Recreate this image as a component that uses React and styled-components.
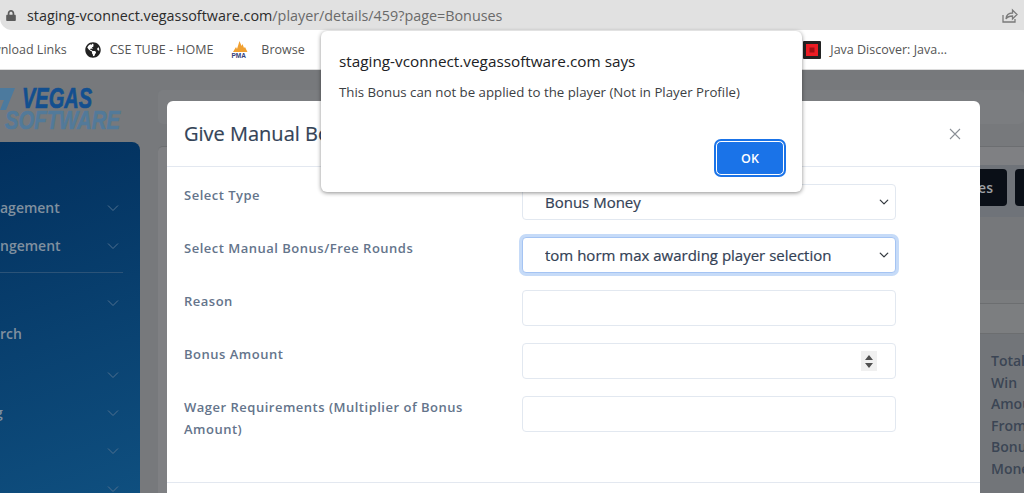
import React from 'react';
import styled, { createGlobalStyle } from 'styled-components';
import { FaGlobeAmericas, FaLock } from 'react-icons/fa';

const chevronUrl = `url("data:image/svg+xml,%3Csvg xmlns='http://www.w3.org/2000/svg' viewBox='0 0 16 16'%3E%3Cpath fill='none' stroke='%23343a40' stroke-linecap='round' stroke-linejoin='round' stroke-width='2' d='M2 5l6 6 6-6'/%3E%3C/svg%3E")`;
const spinnerUrl = `url("data:image/svg+xml,%3Csvg xmlns='http://www.w3.org/2000/svg' viewBox='0 0 16 20'%3E%3Cpath fill='%23505050' d='M8 4l4 5H4zM8 17l-4-5h8z'/%3E%3C/svg%3E")`;

const GlobalStyle = createGlobalStyle`
  html, body {
    margin: 0;
    background: #fff;
  }
  * {
    box-sizing: border-box;
  }
`;

// browser chrome ---------------------------------------------------------
const Page = styled.div`
  position: relative;
  width: 1024px;
  height: 493px;
  overflow: hidden;
  display: flex;
  flex-direction: column;
  font-family: "Open Sans", "Noto Sans", sans-serif;
  background: #fff;
`;

const AddressBar = styled.div`
  flex: none;
  height: 30px;
  display: flex;
  align-items: center;
  padding: 0 6px;
  background: #e1e1e1;
  border-bottom-left-radius: 12px;
`;

const LockIcon = styled(FaLock)`
  flex: none;
  width: 10px;
  height: 11px;
  color: #5c5c5c;
  margin-right: 11px;
`;

const Url = styled.div`
  flex: 1;
  font-size: 14.35px;
  color: #6a6a6a;
  white-space: nowrap;
`;

const Host = styled.span`
  color: #2c2c2c;
`;

const ShareIcon = styled.svg`
  flex: none;
  width: 17px;
  height: 17px;
  fill: none;
  stroke: #7a7a7a;
  stroke-width: 1.3;
`;

const BookmarkBar = styled.div`
  flex: none;
  height: 40px;
  display: flex;
  align-items: center;
  gap: 18px;
  padding-right: 77px;
  background: #fff;
  border-bottom: 1px solid #dcdcdc;
`;

const Bookmark = styled.div`
  display: flex;
  align-items: center;
  gap: ${(p) => p.$gap || 9}px;
  margin-left: ${(p) => p.$shift || 0}px;
  font-size: 12.5px;
  color: #555;
  white-space: nowrap;
`;

const BarSpacer = styled.div`
  flex: 1;
`;

const GlobeIcon = styled(FaGlobeAmericas)`
  width: 16px;
  height: 16px;
  color: #222;
`;

const BookmarkLogo = styled.svg`
  width: 18px;
  height: 18px;
  display: block;
`;

// dimmed page behind the modal --------------------------------------------
const Viewport = styled.div`
  position: relative;
  flex: 1;
  min-height: 0;
  display: flex;
  gap: 18px;
  background: #77797c;
`;

const LeftColumn = styled.div`
  flex: none;
  width: 140px;
  display: flex;
  flex-direction: column;
`;

const Logo = styled.div`
  position: relative;
  height: 72px;
  padding: 17px 0 0 22px;
  font-family: "Liberation Sans", sans-serif;
  font-weight: 700;
  font-style: italic;
`;

const LogoMark = styled.svg`
  position: absolute;
  left: 0;
  top: 18px;
  width: 16px;
  height: 23px;
`;

const LogoLine = styled.div`
  font-size: ${(p) => p.$size}px;
  line-height: 22px;
  margin-left: ${(p) => p.$shift}px;
  color: ${(p) => p.$color};
  -webkit-text-stroke: 0.7px ${(p) => p.$color};
  transform: scaleX(${(p) => p.$stretch});
  transform-origin: left center;
  white-space: nowrap;
`;

const Sidebar = styled.nav`
  flex: 1;
  padding-top: 47px;
  border-top-right-radius: 8px;
  background: linear-gradient(160deg, #02305e 0%, #0f4f7f 100%);
  overflow: hidden;
`;

const MenuRow = styled.div`
  height: 38px;
  margin-top: ${(p) => p.$top || 0}px;
  display: flex;
  align-items: center;
  justify-content: space-between;
  padding-right: 21px;
  font-size: 14px;
  font-weight: 600;
  color: #80909f;
  white-space: nowrap;
`;

const MenuText = styled.span`
  margin-left: ${(p) => p.$clip || 0}px;
  margin-top: -2px;
`;

const MenuChevron = styled.svg`
  width: 12px;
  height: 8px;
  margin-left: auto;
  fill: none;
  stroke: #50708f;
  stroke-width: 1;
`;

const MenuDivider = styled.div`
  width: 123px;
  height: 1px;
  margin-top: 7px;
  background: #2b5378;
`;

const Main = styled.div`
  flex: 1;
  min-width: 0;
  padding-top: 20px;
  display: flex;
  flex-direction: column;
`;

const TopPanel = styled.div`
  height: 34px;
  margin-bottom: 22px;
  border-radius: 5px;
  background: #7b7d80;
`;

const Card = styled.div`
  flex: 1;
  display: flex;
  flex-direction: column;
  padding-left: 12px;
  border-top: 1px solid #6c6e71;
  border-top-left-radius: 5px;
  background: #7f8083;
`;

const CardHead = styled.div`
  height: 18px;
`;

const Toolbar = styled.div`
  height: 52px;
  display: flex;
  justify-content: flex-end;
  align-items: flex-start;
  gap: 8px;
  padding-top: 4px;
  background: #6f7379;
`;

const DarkButton = styled.div`
  flex: none;
  width: ${(p) => p.$width}px;
  height: 37px;
  margin-right: ${(p) => p.$overflow || 0}px;
  display: flex;
  align-items: center;
  justify-content: flex-end;
  padding-right: 14px;
  border-radius: 4px;
  background: #0a0f17;
  color: #9da0a4;
  font-size: 14px;
  font-weight: 600;
`;

const CardBody = styled.div`
  height: 73px;
  background: #76787b;
`;

const TableGap = styled.div`
  height: 13px;
  background: #7a7c7e;
`;

const TableHead = styled.div`
  height: 31px;
  border-top: 1px solid #6c6e70;
  border-bottom: 1px solid #6c6e70;
  background: #7c7e80;
`;

const TableRow = styled.div`
  flex: 1;
  display: flex;
  justify-content: flex-end;
  padding-top: 16px;
  background: #727579;
`;

const TableCell = styled.div`
  width: 33px;
  font-size: 14px;
  font-weight: 600;
  line-height: 21.5px;
  color: #3b4554;
`;

// modal --------------------------------------------------------------------
const Modal = styled.div`
  position: absolute;
  left: 167px;
  top: 31px;
  width: 813px;
  border-radius: 6px;
  background: #fff;
`;

const ModalHeader = styled.div`
  height: 66px;
  display: flex;
  align-items: center;
  justify-content: space-between;
  padding: 0 19px 0 17px;
  border-bottom: 1px solid #e3e8f0;
`;

const ModalTitle = styled.h4`
  margin: 0;
  font-size: 20px;
  font-weight: 500;
  color: #344357;
  -webkit-text-stroke: 0.2px #344357;
`;

const CloseIcon = styled.svg`
  width: 12px;
  height: 12px;
  stroke: #8a8f96;
  stroke-width: 1.1;
  fill: none;
`;

const Form = styled.form`
  display: grid;
  grid-template-columns: 338px 374px;
  row-gap: 17px;
  padding: 17px 17px 42px;
  border-bottom: 1px solid #e3e8f0;
`;

const ModalFooter = styled.div`
  height: 60px;
`;

const Label = styled.label`
  font-size: 13px;
  font-weight: 600;
  line-height: 21.5px;
  letter-spacing: 0.5px;
  color: #64748b;
  padding: 1px 40px 0 0;
`;

const fieldCss = `
  display: block;
  width: 100%;
  height: 36px;
  border: 1px solid #e2e8f0;
  border-radius: 4px;
  background-color: #fff;
  font-family: "Open Sans", "Noto Sans", sans-serif;
  font-size: 15px;
  font-weight: 500;
  color: #334155;
  -webkit-text-stroke: 0.2px #334155;
  outline: none;
`;

const Select = styled.select`
  ${fieldCss}
  appearance: none;
  padding: 0 30px 0 22px;
  background-image: ${chevronUrl};
  background-repeat: no-repeat;
  background-position: right 5px center;
  background-size: 12px 10px;
  ${(p) => p.$focused && `
    border-color: #a5c4f3;
    box-shadow: 0 0 0 3px #c6dbf8;
  `}
`;

const Input = styled.input`
  ${fieldCss}
  padding: 7px 18px 7px 22px;
  &::-webkit-inner-spin-button {
    -webkit-appearance: none;
    opacity: 1;
    width: 16px;
    height: 20px;
    background: #f0f0f0 ${spinnerUrl} no-repeat center / 16px 20px;
  }
`;

// alert dialog --------------------------------------------------------------
const Alert = styled.div`
  position: absolute;
  left: 321px;
  top: 31px;
  width: 481px;
  height: 161px;
  padding: 20px 18px 17px;
  display: flex;
  flex-direction: column;
  border-radius: 6px;
  background: #fff;
  box-shadow: 0 1px 4px rgba(0, 0, 0, 0.45);
`;

const AlertTitle = styled.div`
  font-size: 15.3px;
  line-height: 21px;
  color: #202124;
`;

const AlertText = styled.div`
  margin-top: 11px;
  font-size: 13.25px;
  line-height: 18px;
  color: #3c4043;
`;

const OkButton = styled.button`
  align-self: flex-end;
  margin-top: auto;
  width: 68px;
  height: 34px;
  border: 1px solid #fff;
  border-radius: 5px;
  outline: 2px solid #1a73e8;
  outline-offset: 0;
  background: #1a73e8;
  color: #fff;
  font-family: "Open Sans", sans-serif;
  font-size: 12.5px;
  font-weight: 600;
`;

const Chevron = () => (
  <MenuChevron viewBox="0 0 12 8">
    <path d="M1 1.5l5 5 5-5" />
  </MenuChevron>
);

const fields = [
  { label: 'Select Type', type: 'select', value: 'Bonus Money' },
  { label: 'Select Manual Bonus/Free Rounds', type: 'select', value: 'tom horm max awarding player selection', focused: true },
  { label: 'Reason', type: 'text' },
  { label: 'Bonus Amount', type: 'number' },
  { label: 'Wager Requirements (Multiplier of Bonus Amount)', type: 'text' },
];

export default function App() {
  return (
    <Page>
      <GlobalStyle />
      <AddressBar>
        <LockIcon />
        <Url>
          <Host>staging-vconnect.vegassoftware.com</Host>/player/details/459?page=Bonuses
        </Url>
        <ShareIcon viewBox="0 0 17 17">
          <path d="M2 8v7h12v-3" />
          <path d="M5 12c.3-4 3-6 6.500-6V3l4.500 4.500L11.500 12V9C9 9 6.500 9.500 5 12z" />
        </ShareIcon>
      </AddressBar>

      <BookmarkBar>
        <Bookmark $shift={-9}>wnload Links</Bookmark>
        <Bookmark>
          <GlobeIcon />
          CSE TUBE - HOME
        </Bookmark>
        <Bookmark $gap={12}>
          <BookmarkLogo viewBox="0 0 18 18">
            <path fill="#f0a030" d="M2 11l3-5 1 2 2.500-8 2 5 1-2 1.500 4 1-1 2.500 5z" />
            <text x="0.500" y="16.500" fontSize="6.500" fontWeight="700" fill="#33407a" fontFamily="Liberation Sans">PMA</text>
          </BookmarkLogo>
          Browse
        </Bookmark>
        <BarSpacer />
        <Bookmark>
          <BookmarkLogo viewBox="0 0 18 18">
            <rect width="18" height="18" rx="1" fill="#222" />
            <rect x="3" y="3" width="12" height="12" fill="#ec1c24" />
            <rect x="6.500" y="6.500" width="5" height="5" fill="#a01015" />
          </BookmarkLogo>
          Java Discover: Java...
        </Bookmark>
      </BookmarkBar>

      <Viewport>
        <LeftColumn>
          <Logo>
            <LogoMark viewBox="0 0 16 23">
              <path fill="#4c7a9e" d="M0 0h15L6 22H0l4-10H0z" />
            </LogoMark>
            <LogoLine $size={29} $shift={0} $stretch={0.69} $color="#134f8f">VEGAS</LogoLine>
            <LogoLine $size={26} $shift={-17} $stretch={0.78} $color="#527a9a">SOFTWARE</LogoLine>
          </Logo>
          <Sidebar>
            <MenuRow>
              <MenuText>agement</MenuText>
              <Chevron />
            </MenuRow>
            <MenuRow>
              <MenuText>ngement</MenuText>
              <Chevron />
            </MenuRow>
            <MenuDivider />
            <MenuRow $top={11}>
              <Chevron />
            </MenuRow>
            <MenuRow $top={-7}>
              <MenuText>rch</MenuText>
            </MenuRow>
            <MenuRow $top={3}>
              <Chevron />
            </MenuRow>
            <MenuRow>
              <MenuText $clip={-5}>g</MenuText>
              <Chevron />
            </MenuRow>
            <MenuRow>
              <Chevron />
            </MenuRow>
            <MenuRow>
              <Chevron />
            </MenuRow>
          </Sidebar>
        </LeftColumn>

        <Main>
          <TopPanel />
          <Card>
            <CardHead />
            <Toolbar>
              <DarkButton $width={35}>es</DarkButton>
              <DarkButton $width={30} $overflow={-21} />
            </Toolbar>
            <CardBody />
            <TableGap />
            <TableHead />
            <TableRow>
              <TableCell>Total Win Amount From Bonus Money</TableCell>
            </TableRow>
          </Card>
        </Main>

        <Modal>
          <ModalHeader>
            <ModalTitle>Give Manual Bonus</ModalTitle>
            <CloseIcon viewBox="0 0 12 12">
              <path d="M1 1l10 10M11 1L1 11" />
            </CloseIcon>
          </ModalHeader>
          <Form>
            {fields.map((f) => (
              <React.Fragment key={f.label}>
                <Label>{f.label}</Label>
                {f.type === 'select' ? (
                  <Select $focused={f.focused} defaultValue={f.value}>
                    <option>{f.value}</option>
                  </Select>
                ) : (
                  <Input type={f.type} />
                )}
              </React.Fragment>
            ))}
          </Form>
          <ModalFooter />
        </Modal>
      </Viewport>

      <Alert>
        <AlertTitle>staging-vconnect.vegassoftware.com says</AlertTitle>
        <AlertText>This Bonus can not be applied to the player (Not in Player Profile)</AlertText>
        <OkButton>OK</OkButton>
      </Alert>
    </Page>
  );
}
